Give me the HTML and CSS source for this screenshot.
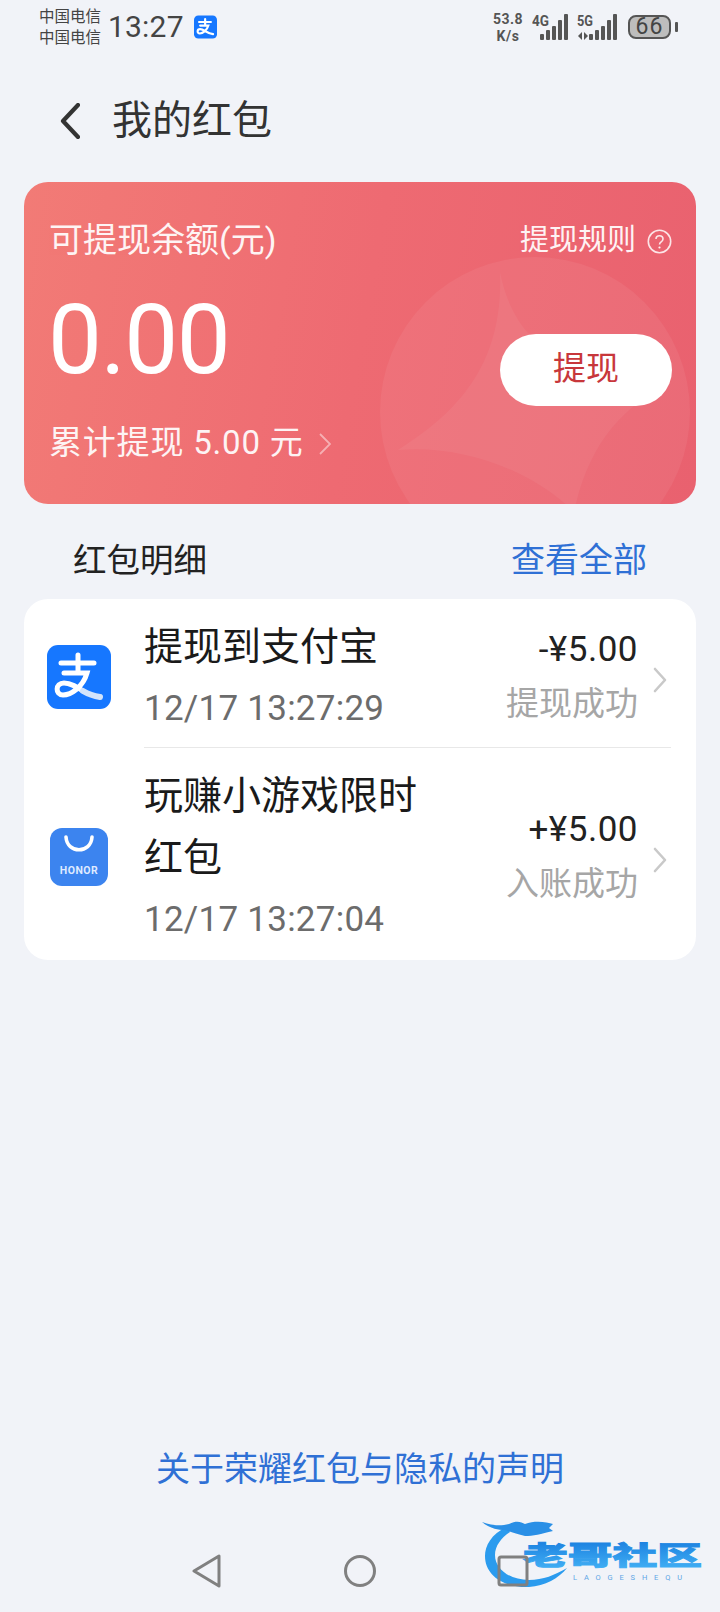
FILE: index.html
```html
<!DOCTYPE html>
<html lang="zh-CN">
<head>
    <meta charset="UTF-8">
    <meta name="viewport" content="width=device-width, initial-scale=1.0">
    <title>我的红包</title>
    <link rel="stylesheet" href="styles.css">
</head>
<body>
    <div class="status-bar">
        <div class="status-left">
            <div class="carriers"><div>中国电信</div><div>中国电信</div></div>
            <div class="time">13:27</div>
            <svg class="status-app" width="23" height="24" viewBox="0 0 64 64">
                <rect width="64" height="64" rx="12" fill="#1677ff"/>
                <path d="M14 18H47M31 10V27M17 28H40C36 42 24 50 16 50C8 50 8 38 17 38C28 38 36 50 53 52" fill="none" stroke="#fff" stroke-width="6" stroke-linecap="round"/>
            </svg>
        </div>
        <div class="status-right">
            <div class="speed"><div>53.8</div><div>K/s</div></div>
            <svg class="signal" width="36" height="26" viewBox="0 0 36 26">
                <text class="net-label" x="0" y="12" textLength="17" lengthAdjust="spacingAndGlyphs">4G</text>
                <rect x="8" y="20" width="4" height="6" rx="1"/>
                <rect x="14" y="16" width="4" height="10" rx="1"/>
                <rect x="20" y="12" width="4" height="14" rx="1"/>
                <rect x="26" y="6" width="4" height="20" rx="1"/>
                <rect x="32" y="0" width="4" height="26" rx="1"/>
            </svg>
            <svg class="signal" width="40" height="26" viewBox="0 0 40 26">
                <text class="net-label" x="0" y="12" textLength="16" lengthAdjust="spacingAndGlyphs">5G</text>
                <path d="M5 18V26L1 22ZM7 18V26L11 22Z" fill="#555"/>
                <rect x="12" y="20" width="4" height="6" rx="1"/>
                <rect x="18" y="16" width="4" height="10" rx="1"/>
                <rect x="24" y="12" width="4" height="14" rx="1"/>
                <rect x="30" y="6" width="4" height="20" rx="1"/>
                <rect x="36" y="0" width="4" height="26" rx="1"/>
            </svg>
            <div class="battery"><span class="battery-num">66</span></div>
            <div class="battery-nub"></div>
        </div>
    </div>

    <div class="header">
        <svg class="back" width="20" height="36" viewBox="0 0 20 36">
            <path d="M18 2L3 18L18 34" fill="none" stroke="#333" stroke-width="4.2" stroke-linecap="round" stroke-linejoin="round"/>
        </svg>
        <div class="page-title">我的红包</div>
    </div>

    <div class="balance-card">
        <svg class="card-decor" width="672" height="322" viewBox="0 0 672 322">
            <circle cx="511" cy="230" r="155" fill="#fff" fill-opacity="0.06"/>
            <path d="M476 90C484 130 505 170 560 182L640 205C600 225 565 260 550 330C510 290 440 262 374 268C425 235 480 190 476 90Z" fill="#fff" fill-opacity="0.05"/>
        </svg>
        <div class="card-top">
            <div class="card-label">可提现余额(元)</div>
            <div class="rules">
                <span>提现规则</span>
                <svg width="25" height="25" viewBox="0 0 25 25">
                    <circle cx="12.5" cy="12.5" r="11.2" fill="none" stroke="#fff" stroke-opacity="0.9" stroke-width="1.6"/>
                    <path d="M9 10C9 5.6 16 5.6 16 10C16 13 12.5 12.8 12.5 15.5" fill="none" stroke="#fff" stroke-opacity="0.9" stroke-width="1.6"/>
                    <circle cx="12.5" cy="18.5" r="1.1" fill="#fff"/>
                </svg>
            </div>
        </div>
        <div class="card-body">
            <div class="card-left">
                <div class="amount">0.00</div>
                <div class="total">
                    <span>累计提现 5.00 元</span>
                    <svg width="12" height="22" viewBox="0 0 12 22">
                        <path d="M1 1L11 11L1 21" fill="none" stroke="#fff" stroke-opacity="0.5" stroke-width="1.8"/>
                    </svg>
                </div>
            </div>
            <div class="withdraw-btn">提现</div>
        </div>
    </div>

    <div class="section-head">
        <div class="section-title">红包明细</div>
        <div class="section-link">查看全部</div>
    </div>

    <div class="list-card">
        <div class="row">
            <div class="row-icon">
                <svg width="64" height="64" viewBox="0 0 64 64">
                    <rect width="64" height="64" rx="11" fill="#1677ff"/>
                    <path d="M14 18H47M31 10V27M17 28H40C36 42 24 50 16 50C8 50 8 38 17 38C24 38 30 42 36 46" fill="none" stroke="#fff" stroke-width="5" stroke-linecap="round"/>
                    <path d="M36 46C41 49 46 51 53 52" fill="none" stroke="#d3e4fb" stroke-width="6" stroke-linecap="round"/>
                </svg>
            </div>
            <div class="row-body row-divider">
                <div class="row-text">
                    <div class="row-title">提现到支付宝</div>
                    <div class="row-date">12/17 13:27:29</div>
                </div>
                <div class="row-right">
                    <div class="row-amount">-¥5.00</div>
                    <div class="row-state">提现成功</div>
                </div>
                <svg class="row-chevron" width="14" height="26" viewBox="0 0 14 26">
                    <path d="M2 2L12 13L2 24" fill="none" stroke="#c9c9c9" stroke-width="2.6" stroke-linecap="round" stroke-linejoin="round"/>
                </svg>
            </div>
        </div>
        <div class="row">
            <div class="row-icon">
                <svg width="58" height="58" viewBox="0 0 58 58">
                    <rect width="58" height="58" rx="12" fill="#3c84ef"/>
                    <path d="M16 9C17 26 41 26 42 9" fill="none" stroke="#fff" stroke-width="3.6" stroke-linecap="round"/>
                    <text class="honor-text" x="29" y="46" text-anchor="middle">HONOR</text>
                </svg>
            </div>
            <div class="row-body row-last">
                <div class="row-text">
                    <div class="row-title">玩赚小游戏限时<br>红包</div>
                    <div class="row-date">12/17 13:27:04</div>
                </div>
                <div class="row-right">
                    <div class="row-amount">+¥5.00</div>
                    <div class="row-state">入账成功</div>
                </div>
                <svg class="row-chevron" width="14" height="26" viewBox="0 0 14 26">
                    <path d="M2 2L12 13L2 24" fill="none" stroke="#c9c9c9" stroke-width="2.6" stroke-linecap="round" stroke-linejoin="round"/>
                </svg>
            </div>
        </div>
    </div>

    <div class="spacer"></div>
    <div class="privacy-link">关于荣耀红包与隐私的声明</div>

    <div class="nav-bar">
        <svg width="32" height="34" viewBox="0 0 32 34">
            <path d="M28 2V32L3 17Z" fill="none" stroke="#808080" stroke-width="3" stroke-linejoin="round"/>
        </svg>
        <svg width="32" height="34" viewBox="0 0 32 34">
            <circle cx="16" cy="17" r="14.5" fill="none" stroke="#808080" stroke-width="3"/>
        </svg>
        <svg width="32" height="34" viewBox="0 0 32 34">
            <rect x="2" y="3" width="28" height="28" rx="2" fill="none" stroke="#808080" stroke-width="3"/>
        </svg>
    </div>

    <!-- 水印 -->
    <svg class="watermark" width="224" height="72" viewBox="0 0 224 72">
        <defs>
            <linearGradient id="wmBlue" x1="0" y1="0" x2="0" y2="1">
                <stop offset="0" stop-color="#1477dc"/>
                <stop offset="1" stop-color="#45b4f6"/>
            </linearGradient>
        </defs>
        <path d="M26 9C10 16 4 28 4 38C4 58 24 70 48 69C64 68 78 60 86 50C74 57 62 62 48 62C30 62 14 52 14 37C14 28 20 20 29 14Z" fill="#2b9bee"/>
        <path d="M1 4C12 8 20 8 28 6C36 2 40 4 44 6C54 2 66 4 72 6L68 10L72 13C60 16 52 18 44 18C36 16 30 14 24 12C16 12 8 10 1 4Z" fill="#2a8fe6"/>
        <text class="wm-title" x="42" y="47" textLength="179" lengthAdjust="spacingAndGlyphs" fill="url(#wmBlue)" stroke="url(#wmBlue)">老哥社区</text>
        <text class="wm-sub" x="92" y="61.5" textLength="109" lengthAdjust="spacing">LAOGESHEQU</text>
    </svg>
</body>
</html>
```

FILE: styles.css
```css
html, body {
    margin: 0;
    padding: 0;
}
body {
    position: relative;
    width: 720px;
    height: 1612px;
    overflow: hidden;
    display: flex;
    flex-direction: column;
    background-color: #f1f3f8;
    font-family: Roboto, 'Noto Sans CJK SC', sans-serif;
    color: #222;
}

/* 状态栏 */
.status-bar {
    height: 57px;
    flex: none;
    display: flex;
    justify-content: space-between;
    padding: 0 42px 0 39px;
    box-sizing: border-box;
}
.status-left {
    display: flex;
    align-items: flex-start;
}
.carriers {
    margin-top: 7px;
    font-size: 15.5px;
    line-height: 21px;
    color: #444;
    width: 69px;
    white-space: nowrap;
}
.time {
    margin-top: 9px;
    font-size: 30px;
    line-height: 36px;
    color: #444;
    letter-spacing: 0.2px;
}
.status-app {
    margin: 15px 0 0 10px;
}
.status-right {
    display: flex;
    align-items: flex-start;
}
.speed {
    margin-top: 11px;
    width: 34px;
    font-size: 14px;
    line-height: 16.5px;
    letter-spacing: 0.5px;
    font-weight: 700;
    color: #555;
    text-align: center;
    white-space: nowrap;
}
.signal {
    margin: 14px 0 0 7px;
    fill: #555;
}
.signal + .signal {
    margin-left: 9px;
}
.net-label {
    font-size: 14px;
    font-weight: 700;
    fill: #555;
}
.battery {
    margin: 15px 0 0 11px;
    width: 43px;
    height: 24px;
    box-sizing: border-box;
    border: 2px solid #555;
    border-radius: 8px;
    background-color: #bdbdbd;
    display: flex;
    align-items: center;
    justify-content: center;
}
.battery-num {
    font-size: 23px;
    line-height: 20px;
    letter-spacing: 1px;
    color: #444;
}
.battery-nub {
    margin: 22px 0 0 4px;
    width: 3px;
    height: 10px;
    border-radius: 1px;
    background-color: #555;
}

/* 标题 */
.header {
    height: 125px;
    flex: none;
    display: flex;
    align-items: center;
    padding: 3px 0 0 60px;
    box-sizing: border-box;
}
.page-title {
    margin-left: 32px;
    font-size: 40px;
    line-height: 50px;
    color: #333;
}

/* 余额卡片 */
.balance-card {
    position: relative;
    flex: none;
    margin: 0 24px;
    height: 322px;
    padding: 36px 24px 0 25px;
    box-sizing: border-box;
    border-radius: 24px;
    overflow: hidden;
    background: linear-gradient(100deg, #f27b76 0%, #ee6a72 50%, #e9616f 100%);
    color: #fff;
}
.card-decor {
    position: absolute;
    top: 0;
    left: 0;
}
.card-top {
    position: relative;
    display: flex;
    justify-content: space-between;
    align-items: center;
    height: 44px;
}
.card-label {
    font-size: 34px;
    line-height: 44px;
    opacity: 0.92;
}
.rules {
    display: flex;
    align-items: center;
    font-size: 29px;
    line-height: 44px;
    opacity: 0.92;
}
.rules svg {
    margin-left: 11px;
    margin-top: 3px;
}
.card-body {
    position: relative;
    display: flex;
    justify-content: space-between;
    align-items: flex-start;
    margin-top: 26px;
}
.amount {
    font-size: 96px;
    line-height: 100px;
    letter-spacing: -1.5px;
    margin: 2px 0 0 -1px;
}
.total {
    display: flex;
    align-items: center;
    margin-top: 31px;
    font-size: 33px;
    line-height: 44px;
    letter-spacing: 0.8px;
    opacity: 0.92;
}
.total svg {
    margin-left: 15px;
    margin-top: 2px;
}
.withdraw-btn {
    margin-top: 46px;
    width: 172px;
    height: 72px;
    border-radius: 36px;
    background-color: #fff;
    color: #c8373b;
    font-size: 33px;
    line-height: 70px;
    text-align: center;
}

/* 明细标题 */
.section-head {
    height: 95px;
    flex: none;
    display: flex;
    justify-content: space-between;
    align-items: center;
    padding: 11px 73px 0;
    box-sizing: border-box;
    font-size: 33.5px;
}
.section-title {
    color: #222;
}
.section-link {
    font-size: 34px;
    color: #2f70d5;
}

/* 明细列表 */
.list-card {
    flex: none;
    margin: 0 24px;
    border-radius: 24px;
    background-color: #fff;
}
.row {
    display: flex;
}
.row-icon {
    width: 120px;
    flex: none;
    display: flex;
    align-items: center;
    justify-content: center;
    padding: 6px 10px 0 0;
    box-sizing: border-box;
}
.row-body {
    flex: 1;
    display: flex;
    align-items: center;
    margin-right: 25px;
    padding: 17px 4px 7px 0;
}
.row-last {
    padding-bottom: 9px;
}
.row-divider {
    border-bottom: 1px solid #e8e8e8;
}
.row-text {
    flex: 1;
}
.row-title {
    font-size: 39px;
    line-height: 62px;
    color: #1a1a1a;
}
.row-date {
    font-size: 35px;
    line-height: 62px;
    letter-spacing: 0.25px;
    color: #6c6c6c;
}
.row-right {
    text-align: right;
    padding-bottom: 3px;
}
.row-amount {
    font-size: 35px;
    line-height: 54px;
    letter-spacing: 0.5px;
    color: #222;
}
.row-state {
    font-size: 33px;
    line-height: 54px;
    color: #a6a6a6;
}
.row-chevron {
    flex: none;
    margin-left: 15px;
    margin-top: 3px;
}

/* 底部 */
.spacer {
    flex: 1;
}
.privacy-link {
    flex: none;
    text-align: center;
    font-size: 34px;
    line-height: 44px;
    color: #2f70d5;
}
.nav-bar {
    position: relative;
    z-index: 1;
    flex: none;
    display: flex;
    justify-content: center;
    gap: 121px;
    padding: 63px 0 24px;
}
.watermark {
    position: absolute;
    left: 481px;
    top: 1518px;
}
.wm-title {
    font-size: 26px;
    font-weight: 900;
    stroke-width: 0.9px;
    font-family: 'Noto Sans CJK SC', sans-serif;
}
.wm-sub {
    font-size: 7.5px;
    font-weight: 400;
    fill: #5ea6e6;
}
.honor-text {
    font-size: 10.5px;
    font-weight: 700;
    fill: #dfeaff;
    letter-spacing: 0.5px;
}
```
